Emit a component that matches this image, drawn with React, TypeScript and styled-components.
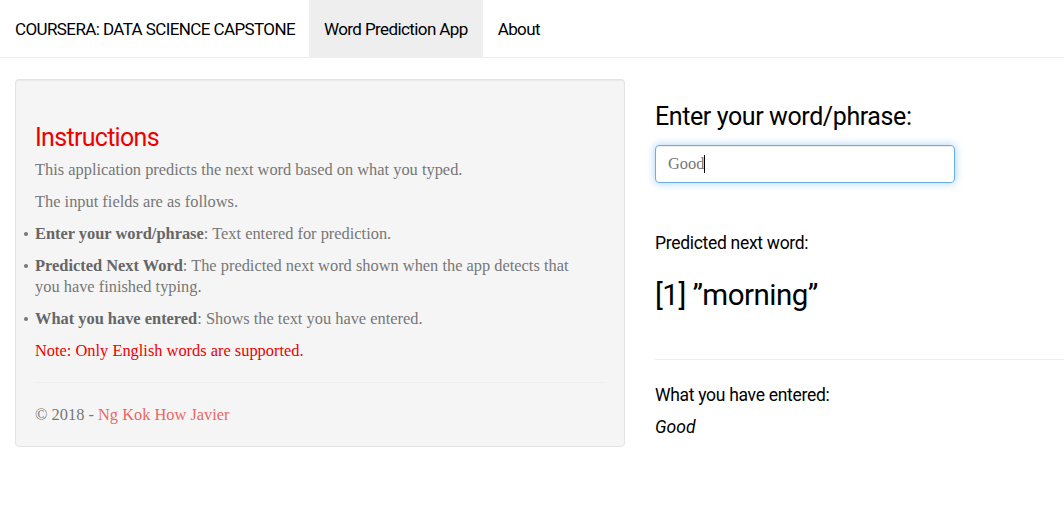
import React from "react";
import styled, { createGlobalStyle } from "styled-components";

const Global = createGlobalStyle`
  * { box-sizing: border-box; }
  html, body { margin: 0; padding: 0; background: #fff; }
  body { font-family: "Liberation Serif", Georgia, serif; color: #777; font-size: 16.4px; }
`;

const cond = `Roboto, "Liberation Sans", sans-serif`;

const Navbar = styled.nav`
  display: flex;
  align-items: stretch;
  height: 58px;
  border-bottom: 1px solid #eee;
  padding-left: 15px;
  font-family: ${cond};
  font-size: 17px;
  letter-spacing: -0.6px;
  color: #000;
`;

const Brand = styled.div`
  display: flex;
  align-items: center;
  padding-right: 14px;
`;

const NavItem = styled.div<{ $active?: boolean }>`
  display: flex;
  align-items: center;
  padding: 0 15px;
  background: ${(p) => (p.$active ? "#eee" : "transparent")};
`;

const Main = styled.div`
  display: grid;
  grid-template-columns: 625px 1fr;
  padding: 21px 0 0 15px;
`;

const Well = styled.div`
  background: #f5f5f5;
  border: 1px solid #e3e3e3;
  border-radius: 4px;
  padding: 19px;
  width: 610px;
  box-shadow: inset 0 1px 1px rgba(0,0,0,0.05);
`;

const Instructions = styled.h3`
  font-family: ${cond};
  font-weight: normal;
  color: #e00;
  font-size: 25px;
  letter-spacing: -0.7px;
  margin: 25px 0 7px;
  line-height: 1.1;
`;

const P = styled.p<{ $red?: boolean }>`
  margin: 0 0 11px;
  line-height: 21px;
  color: ${(p) => (p.$red ? "#e00" : "#777")};
`;

const List = styled.ul`
  margin: 0 0 11px;
  padding: 0 12px 0 0;
  list-style: none;
`;

const Li = styled.li`
  position: relative;
  line-height: 21px;
  margin-bottom: 11px;
  &::before {
    content: "";
    position: absolute;
    left: -11px;
    top: 9px;
    width: 4px;
    height: 4px;
    border-radius: 50%;
    background: #777;
  }
  b { color: #666; }
`;

const Hr = styled.hr`
  border: 0;
  border-top: 1px solid #eee;
  margin: 21px 0;
`;

const Footer = styled.div`
  margin: 0 0 2px;
  line-height: 21px;
  a { color: #eb6864; text-decoration: none; }
`;

const Right = styled.div`
  padding: 0 0 0 15px;
  font-family: ${cond};
  color: #000;
`;

const H3 = styled.h3`
  font-size: 25px;
  letter-spacing: -0.4px;
  font-weight: normal;
  margin: 24px 0 14px;
  line-height: 1.1;
`;

const Input = styled.div`
  width: 300px;
  height: 38px;
  border: 1px solid #66afe9;
  border-radius: 4px;
  box-shadow: inset 0 1px 1px rgba(0,0,0,.075), 0 0 8px rgba(102,175,233,.6);
  padding: 8px 12px;
  font-family: "Liberation Serif", Georgia, serif;
  font-size: 16.4px;
  color: #777;
  display: flex;
  align-items: center;
`;

const Caret = styled.span`
  display: inline-block;
  width: 1px;
  height: 18px;
  background: #000;
`;

const Label = styled.h4`
  font-size: 17.5px;
  letter-spacing: -0.3px;
  font-weight: normal;
  margin: 0;
  line-height: 1.1;
`;

const Big = styled.h2`
  font-size: 29.5px;
  letter-spacing: -0.5px;
  font-weight: normal;
  margin: 0;
  line-height: 1.1;
`;

const RightHr = styled.hr`
  border: 0;
  border-top: 1px solid #eee;
  margin: 0;
`;

const Em = styled.div`
  font-size: 17.5px;
  font-style: italic;
  margin-top: 12px;
`;

const Spacer = styled.div<{ $h: number }>`
  height: ${(p) => p.$h}px;
`;

export default function App() {
  return (
    <>
      <Global />
      <Navbar>
        <Brand>COURSERA: DATA SCIENCE CAPSTONE</Brand>
        <NavItem $active>Word Prediction App</NavItem>
        <NavItem>About</NavItem>
      </Navbar>
      <Main>
        <Well>
          <Instructions>Instructions</Instructions>
          <P>This application predicts the next word based on what you typed.</P>
          <P>The input fields are as follows.</P>
          <List>
            <Li><b>Enter your word/phrase</b>: Text entered for prediction.</Li>
            <Li><b>Predicted Next Word</b>: The predicted next word shown when the app detects that you have finished typing.</Li>
            <Li><b>What you have entered</b>: Shows the text you have entered.</Li>
          </List>
          <P $red>Note: Only English words are supported.</P>
          <Hr />
          <Footer>© 2018 - <a href="#">Ng Kok How Javier</a></Footer>
        </Well>
        <Right>
          <H3>Enter your word/phrase:</H3>
          <Input>Good<Caret /></Input>
          <Spacer $h={51} />
          <Label>Predicted next word:</Label>
          <Spacer $h={26} />
          <Big>[1] ”morning”</Big>
          <Spacer $h={48} />
          <RightHr />
          <Spacer $h={26} />
          <Label>What you have entered:</Label>
          <Em>Good</Em>
        </Right>
      </Main>
    </>
  );
}
